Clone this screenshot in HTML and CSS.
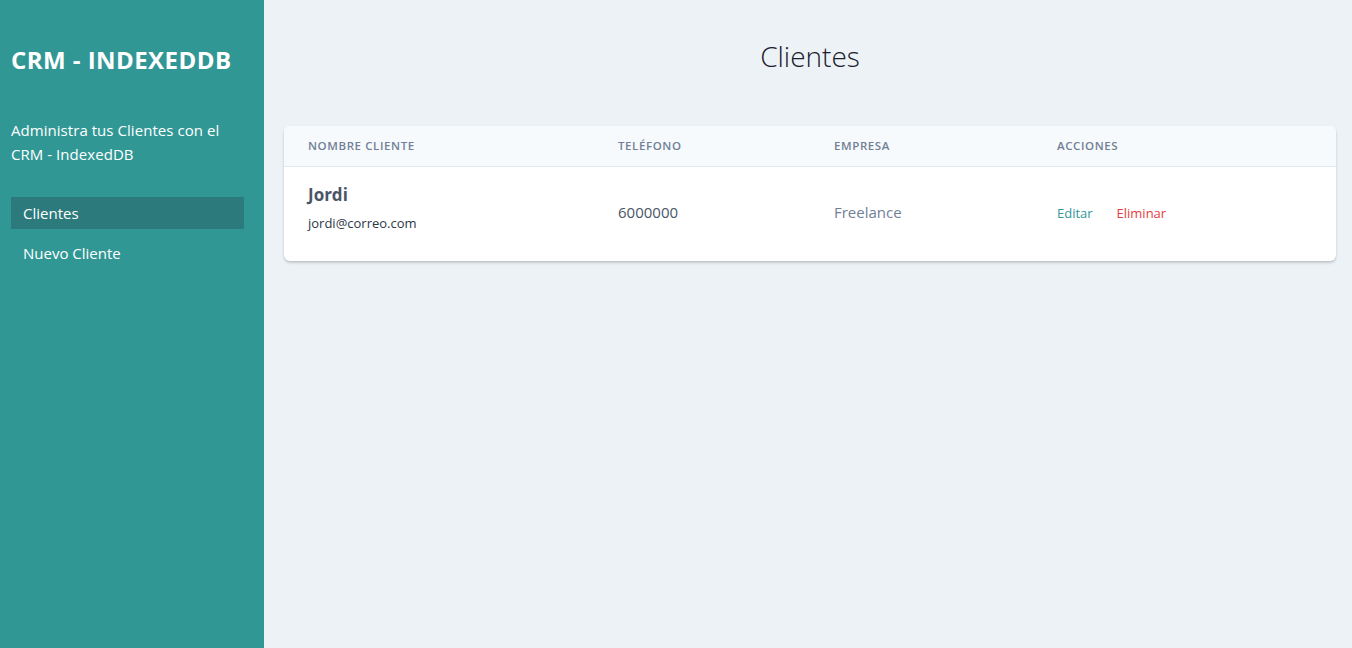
FILE: index.html
```html
<!DOCTYPE html>
<html lang="es">
<head>
<meta charset="utf-8">
<title>CRM - IndexedDB</title>
<link rel="stylesheet" href="styles.css">
</head>
<body>
<div class="layout">
  <aside class="sidebar">
    <h1 class="brand">CRM - IndexedDB</h1>
    <p class="lead">Administra tus Clientes con el CRM - IndexedDB</p>
    <nav class="nav">
      <a class="nav-link active" href="#">Clientes</a>
      <a class="nav-link" href="#">Nuevo Cliente</a>
    </nav>
  </aside>
  <main class="main">
    <h2 class="page-title">Clientes</h2>
    <div class="card">
      <table class="table">
        <thead>
          <tr>
            <th class="c1">Nombre Cliente</th>
            <th class="c2">Teléfono</th>
            <th class="c3">Empresa</th>
            <th class="c4">Acciones</th>
          </tr>
        </thead>
        <tbody>
          <tr>
            <td>
              <p class="name">Jordi</p>
              <p class="email">jordi@correo.com</p>
            </td>
            <td class="phone">6000000</td>
            <td class="company">Freelance</td>
            <td class="actions">
              <a class="edit" href="#">Editar</a>
              <a class="delete" href="#">Eliminar</a>
            </td>
          </tr>
        </tbody>
      </table>
    </div>
  </main>
</div>
</body>
</html>
```
FILE: styles.css
```css
* { box-sizing: border-box; }
html, body { margin: 0; padding: 0; height: 100%; }
body {
  font-family: "Open Sans", "Noto Sans", sans-serif;
  background: #edf2f7;
  color: #4a5568;
}
.layout { display: flex; min-height: 648px; }
.sidebar {
  width: 264px;
  flex: none;
  background: #319795;
  padding: 44px 20px 0 11px;
  color: #fff;
}
.brand {
  margin: 0;
  font-size: 24px;
  line-height: 32px;
  font-weight: 700;
  text-transform: uppercase;
  letter-spacing: 0.45px;
}
.lead {
  margin: 42px 0 0;
  font-size: 15px;
  line-height: 24px;
  letter-spacing: 0.05px;
}
.nav { display: flex; flex-direction: column; margin-top: 31px; gap: 8px; }
.nav-link {
  display: block;
  color: #fff;
  text-decoration: none;
  font-size: 15px;
  line-height: 32px;
  padding: 0 12px;
}
.nav-link.active { background: #2c7a7b; }
.main { flex: 1; padding: 38px 16px 0 20px; }
.page-title {
  margin: 0;
  text-align: center;
  font-size: 28px;
  line-height: 36px;
  font-weight: 300;
  color: #1a202c;
}
.card {
  margin-top: 52px;
  background: #fff;
  border-radius: 6px;
  overflow: hidden;
  box-shadow: 0 2px 3px rgba(0,0,0,0.14), 0 1px 2px rgba(0,0,0,0.08);
}
.table { width: 100%; border-collapse: collapse; }
th {
  background: #f7fafc;
  border-bottom: 1px solid #e2e8f0;
  text-align: left;
  font-size: 11.5px;
  line-height: 16px;
  font-weight: 600;
  text-transform: uppercase;
  letter-spacing: 0.6px;
  color: #718096;
  padding: 12px 24px;
}
.c1 { width: 310px; }
.c2 { width: 216px; }
.c3 { width: 223px; }
td {
  padding: 16px 24px 28px;
  vertical-align: top;
  font-size: 15px;
  line-height: 24px;
}
td.phone, td.company, td.actions { padding-top: 33px; }
.name {
  margin: 0;
  font-size: 17px;
  line-height: 24px;
  font-weight: 700;
  color: #4a5568;
}
.email {
  margin: 6px 0 0;
  font-size: 13px;
  line-height: 20px;
  color: #2d3748;
}
.phone { color: #4a5568; }
.company { color: #718096; }
.actions a { font-size: 13px; text-decoration: none; }
.edit { color: #319795; margin-right: 20px; }
.delete { color: #e53e3e; }
```
